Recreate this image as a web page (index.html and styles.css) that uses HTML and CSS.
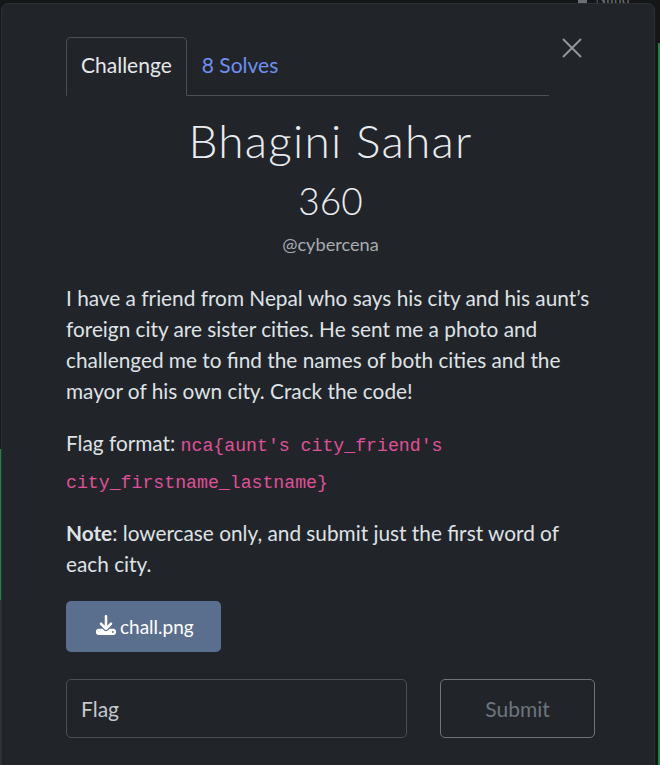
FILE: index.html
```html
<!DOCTYPE html>
<html>
<head>
<meta charset="utf-8">
<link rel="stylesheet" href="styles.css">
</head>
<body>
<div class="backdrop-text"><span class="bd-icon"></span>Nanq</div>
<div class="side-bar-left"></div>
<div class="side-bar-right"></div>
<div class="modal">
  <button class="close" aria-label="Close">
    <svg width="20" height="20" viewBox="0 0 20 20"><path d="M1 1 L19 19 M19 1 L1 19" stroke="#92969b" stroke-width="2" fill="none"/></svg>
  </button>
  <ul class="tabs">
    <li class="tab active">Challenge</li>
    <li class="tab link">8 Solves</li>
  </ul>
  <div class="body">
    <h2 class="title">Bhagini Sahar</h2>
    <h3 class="value">360</h3>
    <div class="author">@cybercena</div>
    <p class="desc">I have a friend from Nepal who says his city and his aunt’s foreign city are sister cities. He sent me a photo and challenged me to find the names of both cities and the mayor of his own city. Crack the code!</p>
    <p class="desc flag-p">Flag format: <code>nca{aunt's city_friend's city_firstname_lastname}</code></p>
    <p class="desc note-p"><strong>Note</strong>: lowercase only, and submit just the first word of each city.</p>
    <div class="files">
      <a class="file-btn">
        <svg width="20" height="20" viewBox="0 0 512 512"><path fill="#fff" d="M288 32c0-17.7-14.3-32-32-32s-32 14.3-32 32V274.7l-73.4-73.4c-12.5-12.5-32.8-12.5-45.3 0s-12.5 32.8 0 45.3l128 128c12.5 12.5 32.8 12.5 45.3 0l128-128c12.5-12.5 12.5-32.8 0-45.3s-32.8-12.5-45.3 0L288 274.7V32zM64 352c-35.3 0-64 28.7-64 64v32c0 35.3 28.7 64 64 64H448c35.3 0 64-28.7 64-64V416c0-35.3-28.7-64-64-64H346.5l-45.3 45.3c-25 25-65.5 25-90.5 0L165.5 352H64zm368 56a24 24 0 1 1 0 48 24 24 0 1 1 0-48z"/></svg>
        <span>chall.png</span>
      </a>
    </div>
    <div class="submit-row">
      <input class="flag-input" type="text" placeholder="Flag">
      <button class="submit">Submit</button>
    </div>
  </div>
</div>
</body>
</html>
```
FILE: styles.css
```css
html, body {
  margin: 0;
  padding: 0;
  height: 765px;
  overflow: hidden;
  background: #141618;
  font-family: Lato, "Open Sans", sans-serif;
}
.backdrop-text {
  position: absolute;
  top: -10px;
  left: 578px;
  color: #6c7075;
  font-size: 16px;
  font-family: "Liberation Serif", serif;
  display: flex;
  align-items: center;
  gap: 8px;
}
.bd-icon {
  width: 9px;
  height: 14px;
  background: #6c7075;
  display: inline-block;
}
.side-bar-left {
  position: absolute;
  left: 0;
  top: 0;
  width: 3px;
  height: 765px;
  background: #2e3135;
  border-top: 449px solid #141618;
  box-sizing: border-box;
}
.side-bar-left::after {
  content: "";
  display: block;
  width: 3px;
  height: 151px;
  background: #1c8a3a;
}
.side-bar-right {
  position: absolute;
  right: 0;
  top: 43px;
  width: 2px;
  height: 722px;
  background: #1c8a3a;
}
.modal {
  position: relative;
  margin: 3px 0 0 1px;
  width: 654px;
  height: 800px;
  box-sizing: border-box;
  background: #212529;
  border: 1px solid #2c3035;
  border-radius: 7px;
  padding: 33px 59px 0 64px;
}
.close {
  position: absolute;
  top: 34px;
  right: 72px;
  background: none;
  border: 0;
  padding: 0;
  width: 20px;
  height: 20px;
}
.close svg { display: block; }
.tabs {
  list-style: none;
  margin: 0;
  padding: 0;
  display: flex;
  width: 483px;
  border-bottom: 1px solid #495057;
}
.tab {
  font-size: 21px;
  line-height: 31.5px;
  padding: 11px 14px 14px 14px;
  margin-bottom: -1px;
  border: 1px solid transparent;
  border-radius: 5px 5px 0 0;
}
.tab.active {
  color: #e6e8ea;
  border-color: #495057 #495057 #212529;
  background: #212529;
}
.tab.link {
  color: #6e8ff0;
}
.body {
  color: #dee2e6;
}
.title {
  margin: 17px 0 0;
  text-align: center;
  font-weight: 300;
  font-size: 46px;
  line-height: 55px;
  letter-spacing: 1.2px;
  color: #e9ecef;
}
.value {
  margin: 11px 0 0;
  text-align: center;
  font-weight: 300;
  font-size: 37px;
  line-height: 44px;
  color: #e9ecef;
}
.author {
  text-align: center;
  font-size: 18.2px;
  line-height: 27px;
  color: #a6abb0;
  margin-top: 8px;
}
.desc {
  margin: 24px 0 0;
  font-size: 20.8px;
  line-height: 31px;
  color: #dfe2e5;
}
.flag-p {
  margin-top: 20px;
  line-height: 33px;
}
.note-p {
  margin-top: 17px;
}
code {
  font-family: "Liberation Mono", monospace;
  font-size: 18.2px;
  color: #e0509a;
}
strong { font-weight: 700; }
.files {
  margin-top: 22px;
}
.file-btn {
  display: inline-flex;
  align-items: center;
  gap: 4px;
  box-sizing: border-box;
  width: 155px;
  height: 51px;
  padding-left: 30px;
  background: #5a6e8d;
  color: #fff;
  border-radius: 5px;
  font-size: 19px;
}
.file-btn svg { margin-top: -2px; }
.submit-row {
  display: flex;
  justify-content: space-between;
  margin-top: 27px;
}
.flag-input {
  box-sizing: border-box;
  width: 341px;
  height: 59px;
  background: #212529;
  border: 1px solid #495057;
  border-radius: 5px;
  padding: 0 14px;
  font-family: Lato, sans-serif;
  font-size: 21px;
  color: #dee2e6;
}
.flag-input::placeholder { color: #c5c9cd; }
.submit {
  box-sizing: border-box;
  width: 155px;
  height: 59px;
  background: transparent;
  border: 1px solid #6c757d;
  border-radius: 5px;
  font-family: Lato, sans-serif;
  font-size: 21px;
  color: #6c757d;
}
```
